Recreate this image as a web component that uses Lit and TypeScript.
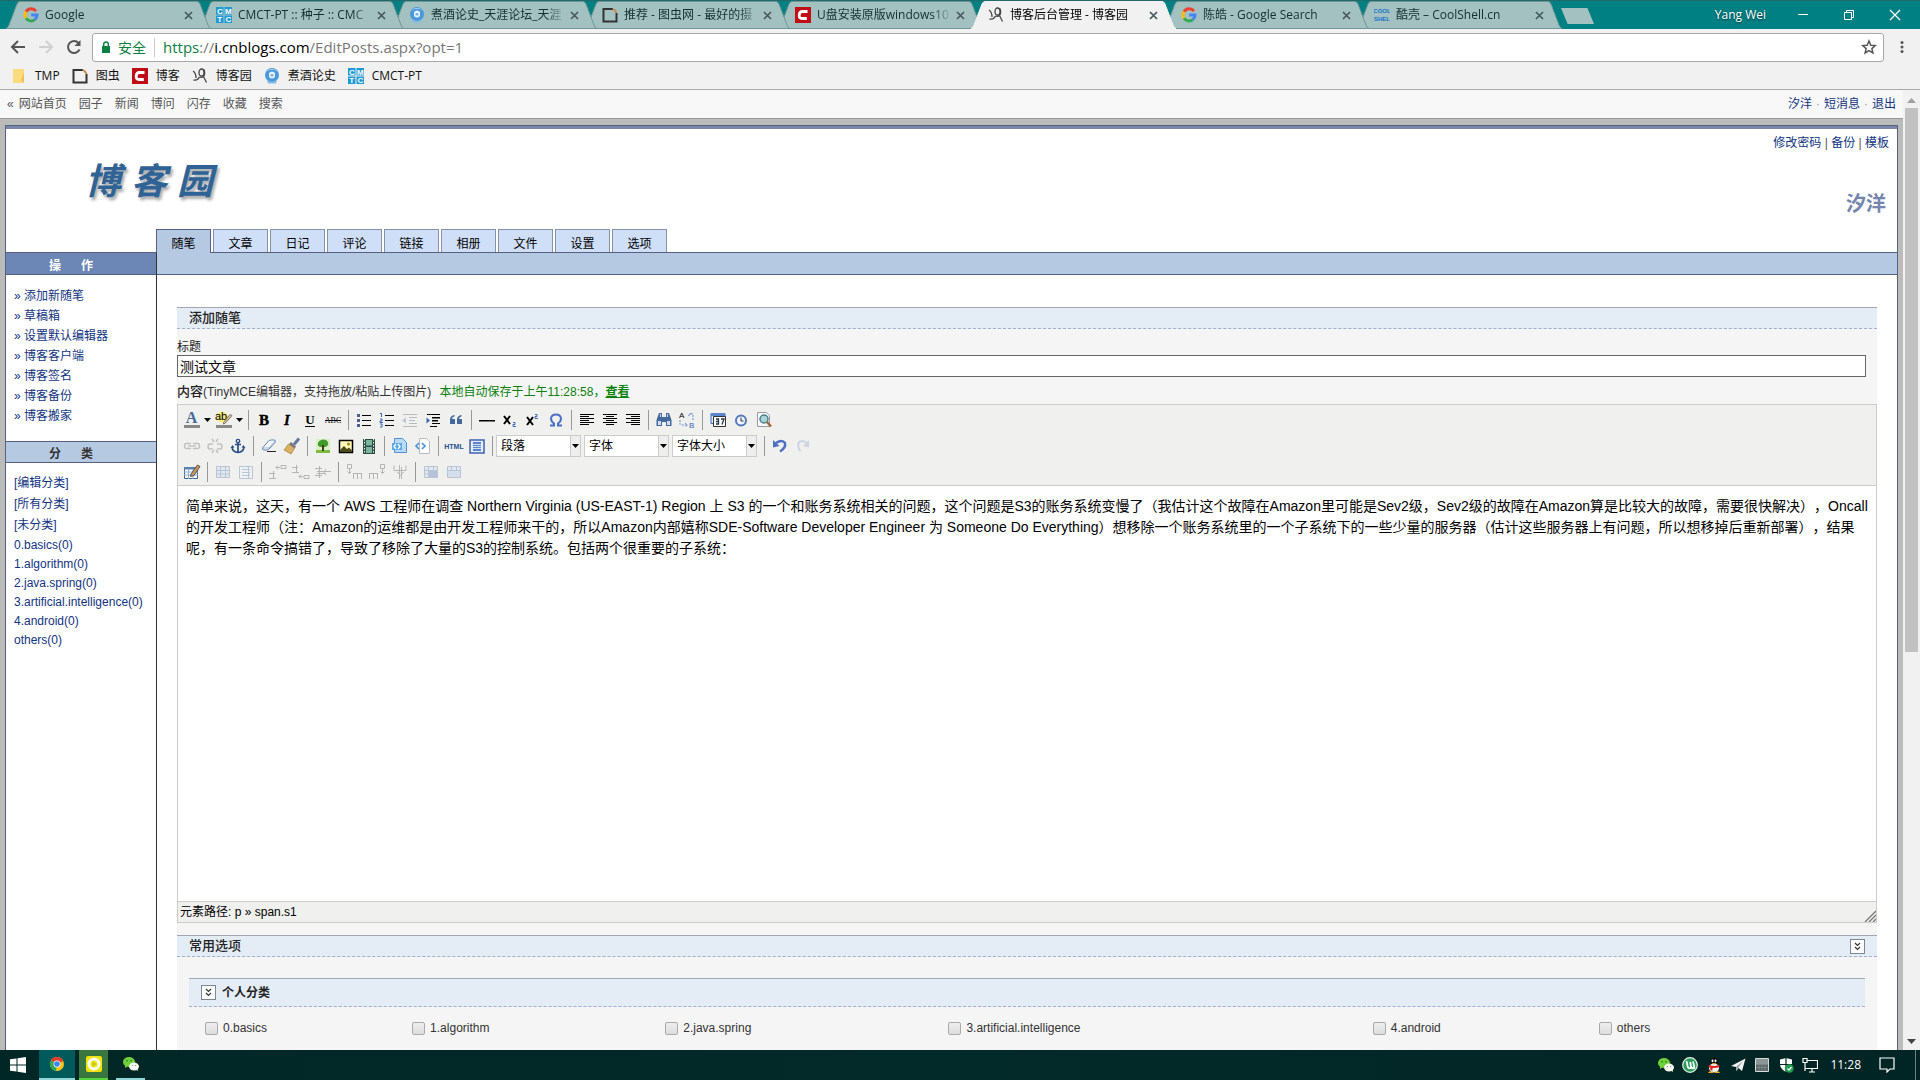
import { LitElement, html, css, svg, nothing } from "lit";
import { customElement, state } from "lit/decorators.js";
import { classMap } from "lit/directives/class-map.js";
import { styleMap } from "lit/directives/style-map.js";

const frame = (size: number, body: unknown) =>
  html`<svg width=${size} height=${size} viewBox="0 0 ${size} ${size}" aria-hidden="true">${body}</svg>`;

/* ---------- 16px site and tray icons ---------- */
const small: Record<string, unknown> = {
  google: svg`<g fill="none" stroke-width="3"><path d="M13 4.2A6 6 0 0 0 3 4.8" stroke="#ea4335"/><path d="M3 4.8a6 6 0 0 0 0 6.4" stroke="#fbbc05"/><path d="M3 11.2a6 6 0 0 0 8.8 1.4" stroke="#34a853"/><path d="M8.2 8H14a6 6 0 0 1-2.2 4.6" stroke="#4285f4"/></g>`,
  cmct: svg`<path fill="#1e9ad6" d="M0 0h7.5v7.5H0zM8.500 0H16v7.500H8.500zM0 8.500h7.500V16H0zM8.500 8.500H16V16H8.500z"/><g fill="#fff" font-family="Liberation Sans" font-weight="700" font-size="8" text-anchor="middle"><text x="3.800" y="6.800">C</text><text x="12.300" y="6.800">M</text><text x="3.800" y="15">T</text><text x="12.300" y="15">C</text></g>`,
  tianya: svg`<circle cx="8" cy="7" r="7" fill="#4a97dc"/><path d="M2.500 4a6.500 6.500 0 0 1 11 0 8 8 0 0 0-11 0z" fill="#b9dcf6"/><path d="M5 5q3-3 6 0v4q-3 3-6 0z" fill="#e8f4fd"/><path d="M6.500 6h3v2.500h-3z" fill="#7db6e6"/><path d="M3 12q5 4 10 0l-1 3.500H4z" fill="#86b9e4"/>`,
  tuchong: svg`<path d="M11 2H1.500v12.500h13V6" fill="none" stroke="#333" stroke-width="2"/><path d="M10 1.500l3 .5 2.500 3.500-2 .5z" fill="#c98a4a"/>`,
  csdn: svg`<path fill="#c00d17" d="M0 0h16v16H0z"/><path d="M12.500 4.500H7.500Q4.500 4.500 4.200 8t2.800 3.500h4.800" fill="none" stroke="#fff" stroke-width="2.800"/>`,
  cnblogs: svg`<g fill="none" stroke="#444" stroke-width="1.300"><path d="M1 3q3 2 3 7M1.500 12q4 1 6-3"/><ellipse cx="9.500" cy="4.500" rx="2.500" ry="3.500"/><path d="M12 1.500q1.500 5-.5 7-2 1.500-4 .5M11.500 8.500l3 6"/></g>`,
  cool: svg`<g fill="#1173c7" font-family="Liberation Sans" font-weight="700" font-size="6" text-anchor="middle"><text x="8" y="6">COOL</text><text x="8" y="14">SHEL</text></g>`,
  folder: svg`<path d="M2 1h11v14H2z" fill="#fbdc7c"/><path d="M10 12l3 3V4z" fill="#eec253"/>`,
  start: svg`<path fill="#fff" d="M0 2.300L6.500 1.400v6.100H0zM7.500 1.200L16 0v7.500H7.500zM0 8.500h6.500v6.100L0 13.700zM7.500 8.500H16V16l-8.500-1.200z"/>`,
  chrome: svg`<circle cx="8" cy="8" r="7" fill="#fbc116"/><path d="M8 8L2 4.400A7 7 0 0 1 14.200 5z" fill="#e33b2e"/><path d="M8 8L2 4.400A7 7 0 0 0 7 15z" fill="#2da94f"/><circle cx="8" cy="8" r="3.500" fill="#fff"/><circle cx="8" cy="8" r="2.800" fill="#3f84ee"/>`,
  player: svg`<rect width="16" height="16" rx="2" fill="#f3e20a"/><circle cx="8" cy="8" r="5" fill="none" stroke="#fff" stroke-width="3"/><path d="M6.500 5.500L11 8l-4.500 2.500z" fill="#c5c91c"/>`,
  wechat: svg`<ellipse cx="6" cy="6" rx="6" ry="5" fill="#6fd03c"/><path d="M2 9l0 3 3-2z" fill="#6fd03c"/><ellipse cx="11" cy="10.500" rx="5" ry="4" fill="#f3f7ee"/><path d="M12 13l3 2-.5-3z" fill="#f3f7ee"/><g fill="#2c6a18"><circle cx="4" cy="4.800" r=".8"/><circle cx="8" cy="4.800" r=".8"/></g><g fill="#777"><circle cx="9.500" cy="9.500" r=".6"/><circle cx="12.500" cy="9.500" r=".6"/></g>`,
  utorrent: svg`<circle cx="8" cy="8" r="7.300" fill="#2c9a5a" stroke="#e5f5ea" stroke-width="1.200"/><path d="M4.500 4l1.300 6q1 2 3.400 1l-1-6M9.200 9.500q.5 2.500 3.300 1.500L11 4.500" fill="none" stroke="#fff" stroke-width="1.700"/>`,
  qq: svg`<ellipse cx="8" cy="5" rx="4" ry="4.500" fill="#111"/><ellipse cx="8" cy="11" rx="5" ry="4.500" fill="#f4f4f4"/><path d="M3 7.500q5 3 10 0l.5 2.500q-5.500 2-11 0zM4 9l2.500 1v3.500H4.500z" fill="#d8231f"/><ellipse cx="6.500" cy="3.800" rx="1" ry="1.400" fill="#fff"/><ellipse cx="9.500" cy="3.800" rx="1" ry="1.400" fill="#fff"/><path d="M5.500 6.300h5L8 7.600zM3 14.500h4V16H2zM9 14.500h4l1 1.500H9z" fill="#f3a81c"/>`,
  telegram: svg`<path d="M1 9L15.500 1.500 12 14 8.500 11 6.500 14 6 10z" fill="#f2f2f2"/><path d="M6 10l7-6-5 7-1.500 3z" fill="#8ea1a1"/>`,
  keys: svg`<path d="M1.500 1.500h13v13h-13z" fill="#5b6464" stroke="#d5dada"/><path d="M2 2h12v5H2z" fill="#8b9696"/><path d="M2 7.500h12M2 10.500h12M5 7v7M8 7v7M11 7v7" stroke="#7a8585"/>`,
  shield: svg`<path d="M8 1l6 1.500v5Q13.500 12 8 15 2.500 12 2 7.500v-5z" fill="#fff"/><path d="M8 1v14M2 7.500h12" stroke="#022" stroke-width="1.200"/><circle cx="11.500" cy="11.500" r="4.200" fill="#1f9e4c"/><path d="M9.500 11.500l1.500 1.500 2.500-3" fill="none" stroke="#fff" stroke-width="1.200"/>`,
  network: svg`<path d="M5 3.500h10.500v8H3M7 15h6M10 12v3M1 1.500h4v4H1zM3 5.500V14" fill="none" stroke="#fff" stroke-width="1.200"/>`,
  notice: svg`<path d="M1 1h14v11h-4l-3 3v-3H1z" fill="none" stroke="#fff" stroke-width="1.200"/>`,
};

/* ---------- 20px editor toolbar glyphs ---------- */
const lines = (d: string, c = "#000") => svg`<path d=${d} stroke=${c} fill="none" stroke-width="1"/>`;
const table = (c: string, fill: string) =>
  svg`<path d="M3.500 4.500h13v11h-13z" fill=${fill} stroke=${c}/><path d="M3 8.500h14M3 12h14M7.500 4v12M12.500 4v12" stroke=${c}/>`;

const tool: Record<string, unknown> = {
  color: svg`<text x="9.500" y="13" text-anchor="middle" font-family="Liberation Serif" font-weight="700" font-size="16" fill="#45699c">A</text><path fill="#888" d="M2 15h16v3H2z"/>`,
  back: svg`<circle cx="8" cy="7" r="5.500" fill="#f9ea7a"/><text x="7" y="10" text-anchor="middle" font-family="Liberation Sans" font-size="11">ab</text><path d="M9.500 12.500l6.500-8 2 1-6.500 7.500-2 1z" fill="#d8c294" stroke="#665" stroke-width=".8"/><path fill="#888" d="M2 15h16v3H2z"/>`,
  bold: svg`<text x="10" y="15" text-anchor="middle" font-family="Liberation Serif" font-weight="700" font-size="15" stroke="#000" stroke-width=".4">B</text>`,
  italic: svg`<text x="10" y="15" text-anchor="middle" font-family="Liberation Serif" font-weight="700" font-style="italic" font-size="15" stroke="#000" stroke-width=".3">I</text>`,
  underline: svg`<text x="10" y="14" text-anchor="middle" font-family="Liberation Serif" font-weight="700" font-size="13">U</text>${lines("M5 16.500h10")}`,
  strike: svg`<text x="10" y="13" text-anchor="middle" font-family="Liberation Serif" font-size="8">ABC</text>${lines("M2 10.500h16")}`,
  ul: svg`<path fill="#4a5f8c" d="M3 4h3v3H3zM3 9h3v3H3zM3 14h3v3H3z"/>${lines("M8 5.500h9M8 10.500h9M8 15.500h9")}`,
  ol: svg`<path d="M4.500 3v4M3 3.500h1.500M3 9h2v2H3v1.500h3M3 14h2v3H3" stroke="#3b67b5" fill="none"/>${lines("M8 5.500h9M8 10.500h9M8 15.500h9")}`,
  outdent: svg`${lines("M3 4.500h14M9 7.500h8M9 10.500h6M9 13.500h8M3 16.500h14", "#bbb")}<path d="M2 10.500l4-3v6z" fill="#bcc6d8"/>`,
  indent: svg`${lines("M4 4.500h13M9 7.500h8M9 10.500h6M9 13.500h8M7 16.500h7")}<path d="M9 7h8v1.500H9zM9 10h6v1.500H9z"/><path d="M7 10.500L3.500 7.500v6z" fill="#3b67b5"/>`,
  quote: svg`<path d="M9 6q-3 1-3 3h3v5H4V9.500Q4 6 8 5zM16 6q-3 1-3 3h3v5h-5V9.500Q11 6 15 5z" fill="#45699c"/>`,
  hr: svg`<path d="M2 10h16v1.500H2z"/>`,
  sub: svg`<path d="M4 6l6 8M10 6l-6 8" stroke="#000" stroke-width="2"/><path d="M13 12.500h2v2h-2v2h3" fill="none" stroke="#3b67b5"/>`,
  sup: svg`<path d="M4 7l6 8M10 7l-6 8" stroke="#000" stroke-width="2"/><path d="M12 4.500h2v2h-2v2h3" fill="none" stroke="#3b67b5"/>`,
  omega: svg`<path d="M4 15.500h4v-2Q5 11.500 5 8.500 5.500 4.500 10 4.500t5 4q0 3-3 5v2h4" fill="none" stroke="#4a6fc4" stroke-width="2"/>`,
  left: lines("M3 4.500h14M3 6.500h9M3 8.500h14M3 10.500h9M3 12.500h14M3 14.500h9"),
  center: lines("M3 4.500h14M6 6.500h8M3 8.500h14M6 10.500h8M3 12.500h14M6 14.500h8"),
  right: lines("M3 4.500h14M8 6.500h9M3 8.500h14M8 10.500h9M3 12.500h14M8 14.500h9"),
  find: svg`<path d="M5 3h3v4h4V3h3l2.500 7v6H12v-4H8v4H2.500v-6z" fill="#45699c"/><path d="M4 11h3v4H4zM13 11h3v4h-3zM6 4h1v3H6zM13 4h1v3h-1z" fill="#cfdcf2"/>`,
  replace: svg`<g font-family="Liberation Sans" font-size="8"><text x="2" y="8">A</text><text x="12" y="18" fill="#3b67b5">B</text></g><path d="M3 10v4q0 1 2 1h5M8 13l2.500 2L8 17M16 10V4M12 4h4M11 6l4-3" fill="none" stroke="#6b8fd0" stroke-dasharray="2 1"/>`,
  date: svg`<path d="M3 3.500h14v10H3z" fill="#dbe8f8" stroke="#3b67b5"/><path d="M3 3h14v3H3z" fill="#5b86cc"/><path d="M5.500 6.500h12v10h-12z" fill="#fff" stroke="#333"/><path d="M8 9h2.500v5H8M8 11.500h2.500M13 9h3l-2 5.500" stroke="#234" fill="none" stroke-width="1.300"/>`,
  time: svg`<circle cx="10" cy="10.500" r="5" fill="#eef4ff" stroke="#5478b8" stroke-width="2"/><path d="M10 7.500v3.500h2.500" stroke="#333" fill="none"/>`,
  preview: svg`<path d="M3.500 2.500h9l3 3v11h-12z" fill="#fafafa" stroke="#99a"/><circle cx="10" cy="9" r="4" fill="#a9d4d8" stroke="#4b7f8c" stroke-width="1.500"/><path d="M13 12l4 4.500" stroke="#9a6a3a" stroke-width="2.500"/>`,
  link: svg`<path d="M9 7.500H4.500q-2 0-2 2.500t2 2.500H9M11 7.500h4.500q2 0 2 2.500t-2 2.500H11M6 10h8" fill="none" stroke="#c2c2c2" stroke-width="1.500"/>`,
  unlink: svg`<path d="M8 8H5Q3 8 3 10.500T5 13h3M12 8h3q2 0 2 2.500T15 13h-3M7 3l2 3M13 3l-2 3M7 17l2-3M13 17l-2-3" fill="none" stroke="#c2c2c2" stroke-width="1.500"/>`,
  anchor: svg`<circle cx="10" cy="5" r="1.700" fill="none" stroke="#2b4f86" stroke-width="1.300"/><path d="M10 7v9M7 8.500h6M4 11q.5 5 6 5.500 5.500-.5 6-5.500" fill="none" stroke="#2b4f86" stroke-width="1.700"/><path d="M2.500 12l2-3 2 2.500zM17.500 12l-2-3-2 2.500z" fill="#2b4f86"/>`,
  eraser: svg`<path d="M3.500 12l6-7q1-1 3-1h3q1.500 1 .5 2.500L10 13q-1 1-3 1H5q-2-.5-1.500-2z" fill="#f8fbff" stroke="#5f7fb2"/><path d="M4 12h6l6-7" fill="none" stroke="#9db5db"/><path d="M8 15.500h9" stroke="#223"/>`,
  brush: svg`<path d="M17 2.500l-5 6" stroke="#6478a0" stroke-width="3"/><path d="M9 6l5 4.500-1.500 2L7 8z" fill="#777"/><path d="M6.500 8l6 4.500-3.500 5.500-7-4z" fill="#d9b263" stroke="#a37b34" stroke-width=".7"/>`,
  tree: svg`<path d="M3 3h14v14H3z" fill="#d8efc4"/><path d="M3 14h14v3H3z" fill="#7cbc3c"/><path d="M10 3.500q4 0 5 3t-3 4.500H7.500Q4 10 5 7t5-3.500z" fill="#3f9a2a"/><path d="M9 9h2v6H9z" fill="#4b3a1a"/>`,
  image: svg`<path d="M3.500 4.500h13v12h-13z" fill="#fff8b8" stroke="#000" stroke-width="1.500"/><path d="M4 14l4-4 3 3 2-1.500 3 3v1.500H4z" fill="#4b4b1e"/><circle cx="12.500" cy="8" r="1.500" fill="#a08a12"/>`,
  media: svg`<path d="M4 3h12v15H4z" fill="#2d4d44"/><path d="M7 4h6v5.500H7zM7 11h6v6H7z" fill="#7fb59c"/><path d="M5.500 3v15M14.500 3v15" stroke="#dfe" stroke-dasharray="1.500 1.500"/>`,
  code: svg`<path d="M4.500 2.500h8l4 4v10h-12z" fill="#b9dbf8" stroke="#4a93d6"/><path d="M2 7h10v7H2z" fill="#5fa8e8"/><path d="M6 8l-2 2.500L6 13M8 8l2 2.500L8 13" fill="none" stroke="#fff" stroke-width="1.300"/>`,
  insert: svg`<path d="M6.500 2.500h7l3 3v12h-10z" fill="#fdfdfd" stroke="#b7bcc6"/><path d="M6 7l-3 3 3 3M9 7l3 3-3 3" fill="none" stroke="#4b93d6" stroke-width="1.700"/>`,
  html: svg`<text x="10" y="13" text-anchor="middle" font-family="Liberation Sans" font-weight="700" font-size="7" fill="#27508f">HTML</text>`,
  full: svg`<path d="M3 4h14v13H3z" fill="#e7effc" stroke="#3f62b0" stroke-width="1.500"/><path d="M6 6h8v9H6z" fill="#5d83c9"/><path d="M6 8.500h8M6 10.500h8M6 12.500h8" stroke="#cfe0fa"/>`,
  undo: svg`<path d="M6 7q6-4 9 0 1 5-5 8.500" fill="none" stroke="#4c6fc2" stroke-width="2.500"/><path d="M3 4v7.500l6.500-1.500z" fill="#4c6fc2"/>`,
  redo: svg`<path d="M14 7Q8 3 5.500 7q-1 5 2 8" fill="none" stroke="#cdd3e2" stroke-width="2"/><path d="M16 4v7.500L10 10z" fill="#cdd3e2"/>`,
  table: svg`<path d="M2.500 5.500h13v11h-13z" fill="#fff" stroke="#3c6290"/><path d="M2 5h13v2.500H2z" fill="#5a80b4"/><path d="M2 10h14M2 13h14M6.500 7v10M11 7v10" stroke="#8faed4"/><path d="M9 12l6.500-9 2.500 1.500-6 9-3.500 1z" fill="#c69c5c" stroke="#433" stroke-width=".8"/>`,
  rowprops: table("#b9c4d4", "#e2e8f0"),
  cellprops: svg`<path d="M3.500 4.500h13v12h-13z" fill="#eef1f5" stroke="#b9c4d4"/><path d="M6 7.500h8M6 10.500h8M6 13.500h8M12.500 5v11" stroke="#b9c4d4"/>`,
  rowbefore: svg`${lines("M2 16.500h7M6.500 9v8M2 11.500h6M9 5.500h4M11 3.500l-2 2 2 2M14 3.500h5v3h-5z", "#b5b5b5")}`,
  rowafter: svg`${lines("M2 10.500h7M6.500 3v8M2 5.500h6M9 14.500h4M11 12.500l-2 2 2 2M14 13.500h5v3h-5z", "#b5b5b5")}`,
  rowdel: svg`${lines("M2 6.500h7M6.500 4v12M2 13.500h7M4 9.500h14M4 11.500h8M13 7l-2 3 2 3", "#b5b5b5")}`,
  colbefore: svg`${lines("M3.500 2.500h4v4h-4zM5.500 7v5M3.500 9.500l2 2 2-2M9.500 11v6M9 11.500h9M13.500 11v6M17.500 11v6", "#b5b5b5")}`,
  colafter: svg`${lines("M13.500 2.500h4v4h-4zM15.500 7v5M13.500 9.500l2 2 2-2M2.500 11v6M2 11.500h9M6.500 11v6M10.500 11v6", "#b5b5b5")}`,
  coldel: svg`${lines("M4 3.500v5h12v-5M9.500 3v14M11.500 5v12M7 10l3.500 3 3.500-3", "#b5b5b5")}`,
  split: svg`${table("#b9c4d4", "#e2e8f0")}<path d="M8 9h8v6H8z" fill="#b5c3d8"/>`,
  merge: svg`${table("#b9c4d4", "#e2e8f0")}<path d="M4 9h12v6H4z" fill="#d5deea"/>`,
};

type Item = [string, string, ("off" | "split")?] | "|" | "selects";
const TOOLBAR: Item[][] = [
  [["color", "文字颜色", "split"], ["back", "背景颜色", "split"], "|", ["bold", "粗体"], ["italic", "斜体"], ["underline", "下划线"], ["strike", "删除线"], "|",
    ["ul", "项目符号"], ["ol", "编号"], ["outdent", "减少缩进", "off"], ["indent", "增加缩进"], ["quote", "引用"], "|", ["hr", "水平线"], ["sub", "下标"], ["sup", "上标"], ["omega", "特殊字符"], "|",
    ["left", "左对齐"], ["center", "居中"], ["right", "右对齐"], "|", ["find", "查找"], ["replace", "替换"], "|", ["date", "插入日期"], ["time", "插入时间"], ["preview", "预览"]],
  [["link", "链接", "off"], ["unlink", "取消链接", "off"], ["anchor", "锚点"], "|", ["eraser", "清除格式"], ["brush", "格式刷"], "|", ["tree", "图片"], ["image", "上传图片"], ["media", "媒体"], "|",
    ["code", "代码"], ["insert", "插入代码"], "|", ["html", "HTML"], ["full", "全屏"], "|", "selects", "|", ["undo", "撤销"], ["redo", "重做", "off"]],
  [["table", "表格"], "|", ["rowprops", "行属性", "off"], ["cellprops", "单元格属性", "off"], "|", ["rowbefore", "上方插入行", "off"], ["rowafter", "下方插入行", "off"], ["rowdel", "删除行", "off"], "|",
    ["colbefore", "左侧插入列", "off"], ["colafter", "右侧插入列", "off"], ["coldel", "删除列", "off"], "|", ["split", "拆分单元格", "off"], ["merge", "合并单元格", "off"]],
];

const reset = css`
  * { box-sizing: border-box; }
  a { color: inherit; text-decoration: none; }
  button { border: 0; padding: 0; margin: 0; background: none; font: inherit; color: inherit; display: flex; align-items: center; justify-content: center; }
  svg { display: block; flex: none; }
  ul { list-style: none; margin: 0; padding: 0; }
`;

@customElement("browser-chrome")
class BrowserChrome extends LitElement {
  static styles = [reset, css`
    :host { display: block; flex: none; background: #f1f1f1; border-bottom: 1px solid #a9a9a9; font: 12px/16px "Open Sans", "Noto Sans CJK SC", sans-serif; color: #111; }
    .strip { display: flex; height: 29px; padding-left: 6px; background: #008083; border-top: 1px solid #22696a; color: #12302f; }
    .tab { position: relative; isolation: isolate; display: flex; align-items: center; flex: none; width: 205px; margin-right: -12px; padding: 0 15px 0 17px; height: 28px; }
    .shape { position: absolute; inset: 0; width: 100%; height: 100%; z-index: -1; }
    .edge { fill: #a3c1c1; stroke: #6f9696; }
    .active .edge { fill: #f1f1f1; stroke: #f1f1f1; }
    .active { color: #000; }
    .title { flex: 1; min-width: 0; margin-left: 6px; white-space: nowrap; mask-image: linear-gradient(90deg, #000 85%, transparent); }
    .close { width: 16px; height: 16px; }
    .new { width: 33px; height: 16px; margin: 7px 0 0 11px; background: #a3c1c1; clip-path: polygon(0 0, 80% 0, 100% 100%, 20% 100%); }
    .window { display: flex; align-items: center; margin: 0 2px 0 auto; color: #fff; }
    .window button { width: 46px; height: 28px; }
    .user { margin-right: 14px; text-shadow: 0 1px 2px #033; }
    .bar { display: flex; align-items: center; height: 36px; padding: 0 12px 0 4px; }
    .nav { width: 28px; height: 28px; }
    .address { flex: 1; display: flex; align-items: center; height: 29px; margin: 0 12px 0 4px; padding: 0 6px 0 7px; border: 1px solid #a8a8a8; border-radius: 3px; background: #fff; font-size: 14px; }
    .secure { display: flex; align-items: center; gap: 6px; color: #0b8043; padding-right: 8px; border-right: 1px solid #ccc; margin-right: 8px; line-height: 19px; }
    .url { flex: 1; color: #777; font-size: 15px; white-space: nowrap; }
    .scheme { color: #0b8043; } .host { color: #000; }
    .marks { display: flex; align-items: center; gap: 12px; height: 24px; padding: 0 0 3px 11px; }
    .marks a { display: flex; align-items: center; gap: 8px; }
  `];
  render() {
    const tabs: [string, string][] = [["google", "Google"], ["cmct", "CMCT-PT :: 种子 :: CMC"], ["tianya", "煮酒论史_天涯论坛_天涯"], ["tuchong", "推荐 - 图虫网 - 最好的摄"], ["csdn", "U盘安装原版windows10"], ["cnblogs", "博客后台管理 - 博客园"], ["google", "陈皓 - Google Search"], ["cool", "酷壳 – CoolShell.cn"]];
    const marks: [string, string][] = [["folder", "TMP"], ["tuchong", "图虫"], ["csdn", "博客"], ["cnblogs", "博客园"], ["tianya", "煮酒论史"], ["cmct", "CMCT-PT"]];
    return html`
      <div class="strip">
        ${tabs.map(([icon, title], i) => html`
          <div class=${classMap({ tab: true, active: i === 5 })} style=${styleMap({ zIndex: String(i === 5 ? 20 : 10 - i) })}>
            <svg class="shape" viewBox="0 0 205 28" preserveAspectRatio="none" aria-hidden="true"><path class="edge" d="M0 27.500Q2 27 3 24L11 3Q12 .5 14 .5H191Q193 .5 194 3L202 24Q203 27 205 27.500z"/></svg>
            ${frame(16, small[icon])}<span class="title">${title}</span>
            <button class="close" aria-label="关闭标签">${frame(16, svg`<path d="M5 5l7 7M12 5l-7 7" stroke="#465a5a" stroke-width="1.700"/>`)}</button>
          </div>`)}
        <button class="new" aria-label="新标签"></button>
        <div class="window">
          <span class="user">Yang Wei</span>
          <button aria-label="最小化">${frame(12, svg`<path d="M1 5.500h10" stroke="#fff"/>`)}</button>
          <button aria-label="还原">${frame(12, svg`<path d="M1.500 3.500h7v7h-7zM3.500 3.500v-2h7v7h-2" fill="none" stroke="#fff"/>`)}</button>
          <button aria-label="关闭">${frame(12, svg`<path d="M1 1l10 10M11 1L1 11" stroke="#fff" stroke-width="1.200"/>`)}</button>
        </div>
      </div>
      <div class="bar">
        <button class="nav" aria-label="后退">${frame(16, svg`<path d="M15 8H2M8 2L2 8l6 6" fill="none" stroke="#555" stroke-width="2"/>`)}</button>
        <button class="nav" aria-label="前进" disabled>${frame(16, svg`<path d="M1 8h13M8 2l6 6-6 6" fill="none" stroke="#d0d0d0" stroke-width="2"/>`)}</button>
        <button class="nav" aria-label="刷新">${frame(16, svg`<path d="M13.500 10.500A6 6 0 1 1 12.500 4" fill="none" stroke="#555" stroke-width="2"/><path d="M14.500 1v6h-6z" fill="#555"/>`)}</button>
        <div class="address">
          <span class="secure">${frame(12, svg`<path d="M2 5h8v7H2z" fill="#0b8043"/><path d="M3.700 5V3.300a2.300 2.300 0 0 1 4.600 0V5" fill="none" stroke="#0b8043" stroke-width="1.400"/>`)}安全</span>
          <span class="url"><span class="scheme">https</span>://<span class="host">i.cnblogs.com</span>/EditPosts.aspx?opt=1</span>
          <button aria-label="收藏">${frame(16, svg`<path d="M8 2l1.800 4.200 4.500.4-3.400 3 1 4.400L8 11.700 4.100 14l1-4.400-3.400-3 4.500-.4z" fill="none" stroke="#555" stroke-width="1.500"/>`)}</button>
        </div>
        <button aria-label="菜单">${frame(12, svg`<g fill="#555"><circle cx="6" cy="1.500" r="1.500"/><circle cx="6" cy="6" r="1.500"/><circle cx="6" cy="10.500" r="1.500"/></g>`)}</button>
      </div>
      <nav class="marks">${marks.map(([icon, t]) => html`<a href="#">${frame(16, small[icon])}${t}</a>`)}</nav>`;
  }
}

@customElement("rich-editor")
class RichEditor extends LitElement {
  static styles = [reset, css`
    :host { display: block; border: 1px solid #ccc; background: #fff; color: #000; }
    .tools { padding: 2px 2px 0; background: #f0f0ee; border-bottom: 1px solid #ccc; }
    .row { display: flex; align-items: center; height: 26px; }
    .tool { width: 23px; height: 22px; }
    .drop { width: 9px; height: 22px; }
    .sep { width: 8px; display: flex; justify-content: center; }
    .sep::before { content: ""; width: 1px; height: 20px; background: #999; }
    .pick { position: relative; margin-right: 3px; }
    .pick select { appearance: none; display: block; width: 85px; height: 22px; padding: 0 20px 0 4px; border: 1px solid #ccc; border-radius: 0; background: #fff; color: #000; font: 12px "Liberation Sans", "Noto Sans CJK SC", sans-serif; }
    .pick span { position: absolute; right: 1px; top: 1px; bottom: 1px; width: 10px; display: flex; align-items: center; justify-content: center; background: #eee; border-left: 1px solid #ccc; pointer-events: none; }
    .text { height: 415px; padding: 10px 8px; overflow: hidden; font-size: 14px; line-height: 21px; outline: none; text-spacing-trim: space-all; }
    .text p { margin: 0; }
    .line { display: block; white-space: nowrap; }
    .status { display: flex; align-items: center; justify-content: space-between; height: 21px; padding-left: 2px; background: #f0f0ee; border-top: 1px solid #ccc; font-size: 12px; }
    .grip { align-self: flex-end; }
  `];
  private arrow = () => html`<svg width="7" height="4" viewBox="0 0 7 4" aria-hidden="true"><path d="M0 0h7L3.500 4z"/></svg>`;
  private item(it: Item) {
    if (it === "|") return html`<span class="sep"></span>`;
    if (it === "selects")
      return ["段落", "字体", "字体大小"].map(t => html`<label class="pick"><select aria-label=${t}><option>${t}</option></select><span>${this.arrow()}</span></label>`);
    const [icon, name, mode] = it;
    return html`<button class="tool" aria-label=${name} ?disabled=${mode === "off"}>${frame(20, tool[icon])}</button>
      ${mode === "split" ? html`<button class="drop" aria-label="${name}选项">${this.arrow()}</button>` : nothing}`;
  }
  render() {
    return html`
      <div class="tools">${TOOLBAR.map(r => html`<div class="row">${r.map(i => this.item(i))}</div>`)}</div>
      <div class="text" role="textbox" aria-label="内容" contenteditable="true" spellcheck="false"><p>
        <span class="line">简单来说，这天，有一个 AWS 工程师在调查 Northern Virginia (US-EAST-1) Region 上 S3 的一个和账务系统相关的问题，这个问题是S3的账务系统变慢了（我估计这个故障在Amazon里可能是Sev2级，Sev2级的故障在Amazon算是比较大的故障，需要很快解决），Oncall</span>
        <span class="line">的开发工程师（注：Amazon的运维都是由开发工程师来干的，所以Amazon内部嬉称SDE-Software Developer Engineer 为 Someone Do Everything）想移除一个账务系统里的一个子系统下的一些少量的服务器（估计这些服务器上有问题，所以想移掉后重新部署），结果</span>
        <span class="line">呢，有一条命令搞错了，导致了移除了大量的S3的控制系统。包括两个很重要的子系统：</span></p></div>
      <div class="status"><span>元素路径: <a href="#">p</a> » <a href="#">span.s1</a></span><span class="grip">${frame(12, svg`<path d="M1 12L12 1M5 12l7-7M9 12l3-3" stroke="#777" stroke-width="1.300"/>`)}</span></div>`;
  }
}

@customElement("task-bar")
class TaskBar extends LitElement {
  static styles = [reset, css`
    :host { display: flex; align-items: center; justify-content: space-between; flex: none; height: 30px; background: linear-gradient(90deg, #012626, #022a28 50%, #012424); color: #fff; font: 12px/16px "Open Sans", sans-serif; }
    .group { display: flex; align-items: center; height: 30px; }
    .start { width: 36px; }
    .app { height: 30px; border-bottom: 2px solid #8fd6d4; }
    .chrome { width: 36px; margin: 0 4px 0 3px; background: #00595a; }
    .player { width: 29px; margin-right: 8px; background: #3a7640; border-color: #52d63c; }
    .wechat { width: 29px; }
    .tray { gap: 8px; }
    .clock { margin: 0 10px 0 4px; }
    .desk { width: 5px; height: 30px; margin-left: 12px; border-left: 1px solid #6b8383; }
  `];
  render() {
    return html`
      <div class="group">
        <button class="start" aria-label="开始">${frame(16, small.start)}</button>
        <button class="app chrome" aria-label="Chrome">${frame(16, small.chrome)}</button>
        <button class="app player" aria-label="播放器">${frame(16, small.player)}</button>
        <button class="app wechat" aria-label="微信">${frame(16, small.wechat)}</button>
      </div>
      <div class="group tray">
        ${["wechat", "utorrent", "qq", "telegram", "keys", "shield", "network"].map(n => html`<button aria-label=${n}>${frame(16, small[n])}</button>`)}
        <time class="clock">11:28</time>
        <button aria-label="通知">${frame(16, small.notice)}</button>
        <button class="desk" aria-label="显示桌面"></button>
      </div>`;
  }
}

@customElement("app-root")
class AppRoot extends LitElement {
  @state() private subject = "测试文章";
  static styles = [reset, css`
    :host { display: flex; flex-direction: column; height: 100vh; overflow: hidden; font: 12px/16px "Liberation Sans", "Noto Sans CJK SC", sans-serif; color: #333; }
    .view { flex: 1; min-height: 0; display: flex; }
    .page { flex: 1; min-width: 0; display: flex; flex-direction: column; overflow: hidden; background: #bbb; }
    .scroll { flex: none; display: flex; flex-direction: column; align-items: center; width: 17px; padding: 8px 0 6px; background: #f1f1f1; }
    .thumb { width: 13px; height: 57.5%; margin-top: 5px; background: #c1c1c1; }
    .down { margin-top: auto; }
    .site { flex: none; display: flex; align-items: center; justify-content: space-between; height: 29px; padding: 0 7px; background: #f8f8f8; border-bottom: 1px solid #999; color: #555; }
    .menu { display: flex; gap: 12px; }
    .first { margin-right: -7px; }
    .me { display: flex; gap: 4px; color: #999; }
    .me a, .quick a { color: #11337f; }
    .sheet { flex: 1; display: flex; flex-direction: column; margin: 6px 5px 0; background: #fff; border: 1px solid #55617f; border-bottom: 0; }
    .head { border-top: 3px solid #7a87ab; }
    .brand { display: flex; justify-content: space-between; height: 100px; padding: 6px 8px 0 79px; }
    .logo { display: flex; gap: 10px; align-items: center; margin: 0; font-size: 36px; line-height: 60px; font-weight: 700; font-style: italic; color: #2f6396; text-shadow: 2px 3px 3px #aaa; }
    .quick { text-align: right; color: #555; }
    .owner { margin: 39px 3px 0 0; font-size: 20px; line-height: 28px; font-weight: 700; color: #7585ae; }
    .tabs { display: flex; gap: 2px; height: 23px; padding-left: 150px; }
    .tabs a { width: 55px; height: 23px; padding-top: 6px; text-align: center; color: #000; background: #cfdff7; border: 1px solid #8792a6; border-bottom: 0; }
    .tabs .on { height: 24px; background: #b6c9e3; border-color: #55617f; position: relative; }
    .body { flex: 1; display: flex; }
    .side { flex: none; width: 151px; border-right: 1px solid #333; color: #11337f; }
    .cap { display: flex; justify-content: center; gap: 20px; height: 22px; padding-top: 4px; margin: 0; padding-right: 20px; font-size: 12px; line-height: 16px; border: 1px solid #55617f; border-width: 1px 0; background: #b6c9e3; color: #333; }
    .cap.main { height: 23px; padding-top: 5px; background: #6c86b5; color: #fff; }
    .ops { padding: 11px 8px 15px; line-height: 20px; }
    .cats { padding: 10px 8px; line-height: 19px; }
    .wide { line-height: 21px; }
    .main-col { flex: 1; min-width: 0; }
    .band { height: 23px; background: #b6c9e3; border: 1px solid #55617f; border-width: 1px 0; }
    .form { margin: 32px 20px 0; padding-bottom: 24px; background: #f5f5f5; }
    h2, h3 { display: flex; align-items: center; margin: 0; font-size: 13px; line-height: 16px; font-weight: 500; color: #222; background: #e4ecf5; border-top: 1px solid #a0a8b4; border-bottom: 1px dashed #a0b0cc; }
    h2 { height: 22px; padding: 0 12px; justify-content: space-between; }
    h3 { height: 29px; gap: 6px; padding: 0 12px; margin: 21px 12px 0; font-size: 12px; font-weight: 700; }
    .fold { width: 15px; height: 15px; border: 1px solid #7d8794; background: #fff; }
    .subject { display: block; padding-top: 11px; line-height: 15px; color: #222; }
    .field { display: block; width: calc(100% - 11px); height: 22px; padding: 0 2px; border: 1px solid #666; background: #fff; color: #000; font: 14px "Liberation Sans", "Noto Sans CJK SC", sans-serif; }
    .note { padding: 6px 0 3px; line-height: 18px; }
    .note b { font-size: 13px; font-weight: 500; color: #222; }
    .saved { margin-left: 5px; color: #0a820a; }
    .saved a { text-decoration: underline; font-weight: 700; }
    .editor { margin-bottom: 12px; }
    .checks { display: grid; grid-template-columns: 207fr 253fr 283fr 424fr 226fr 266fr; margin: 13px 12px 0 28px; }
    .checks label { display: flex; align-items: center; gap: 5px; }
    .checks input { appearance: none; width: 13px; height: 13px; margin: 0; border: 1px solid #aaa; border-radius: 2px; background: linear-gradient(#eee, #ddd); }
  `];
  private fold = () => html`<button class="fold" aria-label="展开">${frame(9, svg`<path d="M2 1l2.500 2.500L7 1M2 5l2.500 2.500L7 5" fill="none" stroke="#333" stroke-width="1.200"/>`)}</button>`;
  render() {
    return html`
      <browser-chrome></browser-chrome>
      <div class="view">
        <div class="page">
          <div class="site">
            <nav class="menu"><span class="first">«</span>${["网站首页", "园子", "新闻", "博问", "闪存", "收藏", "搜索"].map(t => html`<a href="#">${t}</a>`)}</nav>
            <div class="me"><a href="#">汐洋</a>·<a href="#">短消息</a>·<a href="#">退出</a></div>
          </div>
          <div class="sheet">
            <header class="head">
              <div class="brand">
                <h1 class="logo"><span>博</span><span>客</span><span>园</span></h1>
                <div><div class="quick"><a href="#">修改密码</a> | <a href="#">备份</a> | <a href="#">模板</a></div>
                <div class="quick"><div class="owner">汐洋</div></div></div>
              </div>
              <nav class="tabs">${["随笔", "文章", "日记", "评论", "链接", "相册", "文件", "设置", "选项"].map((t, i) => html`<a href="#" class=${i ? "" : "on"}>${t}</a>`)}</nav>
            </header>
            <div class="body">
              <aside class="side">
                <h4 class="cap main"><span>操</span><span>作</span></h4>
                <ul class="ops">${["添加新随笔", "草稿箱", "设置默认编辑器", "博客客户端", "博客签名", "博客备份", "博客搬家"].map(t => html`<li>» <a href="#">${t}</a></li>`)}</ul>
                <h4 class="cap"><span>分</span><span>类</span></h4>
                <ul class="cats">
                  ${["[编辑分类]", "[所有分类]", "[未分类]"].map(t => html`<li class="wide"><a href="#">${t}</a></li>`)}
                  ${["0.basics(0)", "1.algorithm(0)", "2.java.spring(0)", "3.artificial.intelligence(0)", "4.android(0)", "others(0)"].map(t => html`<li><a href="#">${t}</a></li>`)}
                </ul>
              </aside>
              <main class="main-col">
                <div class="band"></div>
                <form class="form" @submit=${(e: Event) => e.preventDefault()}>
                  <h2>添加随笔</h2>
                  <label class="subject" for="subject">标题</label>
                  <input class="field" id="subject" type="text" .value=${this.subject} @input=${(e: InputEvent) => (this.subject = (e.target as HTMLInputElement).value)} />
                  <div class="note"><b>内容</b>(TinyMCE编辑器，支持拖放/粘贴上传图片) <span class="saved">本地自动保存于上午11:28:58，<a href="#">查看</a></span></div>
                  <rich-editor class="editor"></rich-editor>
                  <h2>常用选项${this.fold()}</h2>
                  <h3>${this.fold()}个人分类</h3>
                  <div class="checks">${["0.basics", "1.algorithm", "2.java.spring", "3.artificial.intelligence", "4.android", "others"].map(t => html`<label><input type="checkbox" />${t}</label>`)}</div>
                </form>
              </main>
            </div>
          </div>
        </div>
        <div class="scroll" aria-hidden="true">
          <svg width="9" height="5" viewBox="0 0 9 5"><path d="M0 5h9L4.500 0z" fill="#a0a0a0"/></svg>
          <div class="thumb"></div>
          <svg class="down" width="9" height="5" viewBox="0 0 9 5"><path d="M0 0h9L4.500 5z" fill="#444"/></svg>
        </div>
      </div>
      <task-bar></task-bar>`;
  }
}
